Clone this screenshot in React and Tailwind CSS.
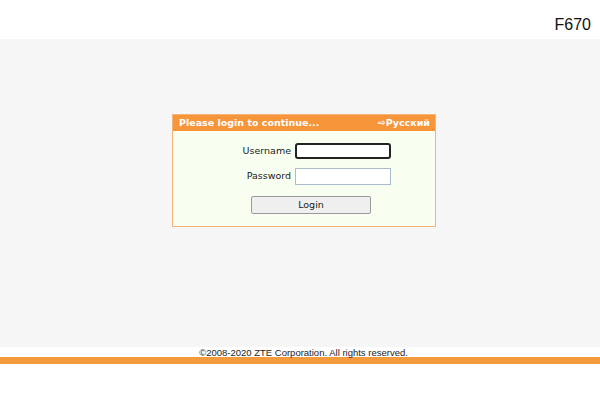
export default function App() {
  return (
    <div className="w-[600px] h-[400px] bg-white overflow-hidden" style={{ fontFamily: '"DejaVu Sans", Verdana, sans-serif' }}>
      <div className="h-[39px] flex justify-end items-start pt-[15px] pr-[9px]">
        <span className="text-[16px] leading-[20px] text-[#111]" style={{ fontFamily: '"Liberation Sans", Arial, sans-serif' }}>F670</span>
      </div>
      <div className="h-[308px] bg-[#f6f6f6] pt-[75px] pl-[172px]">
        <div className="w-[264px] h-[113px] border border-[#f5b57a] bg-[#f8fff0]">
          <div className="h-[16px] bg-[#f7953a] flex items-center justify-between pl-[6px] pr-[5px] text-white font-bold text-[9.5px] leading-[16px]">
            <span>Please login to continue...</span>
            <span>⇨Русский</span>
          </div>
          <div className="flex items-center mt-[12px] h-[16px]">
            <span className="w-[122px] text-right text-[9.5px] text-[#222] pr-[4px]">Username</span>
            <div className="w-[96px] h-[16px] border-2 border-[#222] rounded-[3px] bg-white" />
          </div>
          <div className="flex items-center mt-[9px] h-[17px]">
            <span className="w-[122px] text-right text-[9.5px] text-[#222] pr-[4px]">Password</span>
            <div className="w-[96px] h-[17px] border border-[#a9bccc] bg-white" />
          </div>
          <div className="mt-[11px] ml-[78px] w-[120px] h-[18px] border border-[#9a9a9a] rounded-[2px] bg-[#efefef] flex items-center justify-center text-[9.5px] text-[#222]">
            Login
          </div>
        </div>
      </div>
      <div className="h-[10px] flex justify-center pl-[7px]">
        <span className="text-[9.5px] leading-[12px] text-[#222]" style={{ fontFamily: '"Liberation Sans", Arial, sans-serif' }}>©2008-2020 ZTE Corporation. All rights reserved.</span>
      </div>
      <div className="h-[7px] bg-[#f39a3d]" />
    </div>
  );
}
